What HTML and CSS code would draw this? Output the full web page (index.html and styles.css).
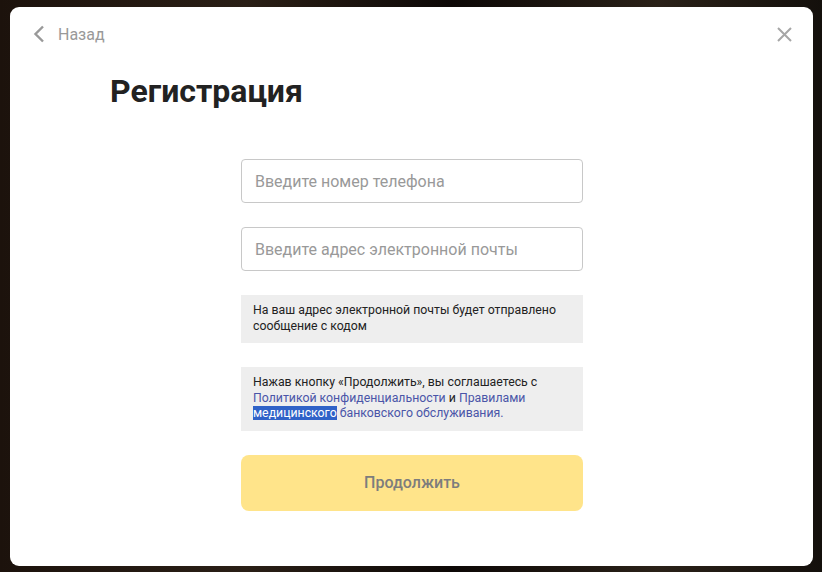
FILE: index.html
```html
<!DOCTYPE html>
<html lang="ru">
<head>
<meta charset="utf-8">
<title>Регистрация</title>
<link rel="stylesheet" href="styles.css">
</head>
<body>
<div class="modal">
  <div class="modal-head">
    <a class="back" href="#">
      <svg class="back-icon" width="12" height="18" viewBox="0 0 12 18"><path d="M10 1.5 L2.5 9 L10 16.5" fill="none" stroke="#999" stroke-width="2.4"/></svg>
      <span>Назад</span>
    </a>
    <button class="close" type="button" aria-label="Закрыть">
      <svg width="15" height="15" viewBox="0 0 15 15"><path d="M1 1 L14 14 M14 1 L1 14" stroke="#a6a6a6" stroke-width="2"/></svg>
    </button>
  </div>
  <h1 class="title">Регистрация</h1>
  <form class="form">
    <input class="field" type="text" placeholder="Введите номер телефона">
    <input class="field" type="text" placeholder="Введите адрес электронной почты">
    <div class="note">На ваш адрес электронной почты будет отправлено сообщение с кодом</div>
    <div class="note note-agree">Нажав кнопку «Продолжить», вы соглашаетесь с <a href="#">Политикой конфиденциальности</a> и <a href="#">Правилами <span class="sel">медицинского</span> банковского обслуживания.</a></div>
    <button class="submit" type="button">Продолжить</button>
  </form>
</div>
</body>
</html>
```
FILE: styles.css
```css
* { box-sizing: border-box; }
html, body { margin: 0; height: 100%; }
body {
  background: linear-gradient(90deg, #1c120c 0%, #2a1f16 30%, #0d0806 55%, #2a2118 80%, #14100c 100%);
  padding: 7px 9px 6px 10px;
  font-family: Roboto, "Noto Sans", sans-serif;
}
.modal {
  background: #fff;
  border-radius: 9px;
  height: 559px;
  padding: 17px 21px 0 23px;
  display: flex;
  flex-direction: column;
}
.modal-head {
  display: flex;
  justify-content: space-between;
  align-items: center;
  height: 20px;
}
.back {
  display: flex;
  align-items: center;
  gap: 13px;
  color: #999;
  text-decoration: none;
  font-size: 16px;
}
.close {
  border: 0;
  background: none;
  padding: 0;
  width: 15px;
  height: 15px;
  display: flex;
}
.title {
  margin: 27px 0 0 77px;
  font-size: 32px;
  font-weight: 700;
  color: #222;
  line-height: 40px;
}
.form {
  width: 342px;
  align-self: center;
  margin: 48px 0 0 -1px;
  display: flex;
  flex-direction: column;
  gap: 24px;
}
.field {
  height: 44px;
  border: 1px solid #c8c8c8;
  border-radius: 4px;
  padding: 0 13px;
  font-family: inherit;
  font-size: 16px;
  color: #222;
}
.field::placeholder { color: #999; }
.note {
  background: #eee;
  font-size: 12.3px;
  line-height: 15.5px;
  color: #222;
  padding: 8px 12px 9px;
}
.note-agree { padding-bottom: 9px; }
.note a { color: #4a55a8; text-decoration: none; }
.sel { background: #2f62c8; color: #fff; }
.submit {
  height: 56px;
  border: 0;
  border-radius: 8px;
  background: #ffe48a;
  color: #7d7d7d;
  font-family: inherit;
  font-size: 16px;
  font-weight: 500;
}
```
